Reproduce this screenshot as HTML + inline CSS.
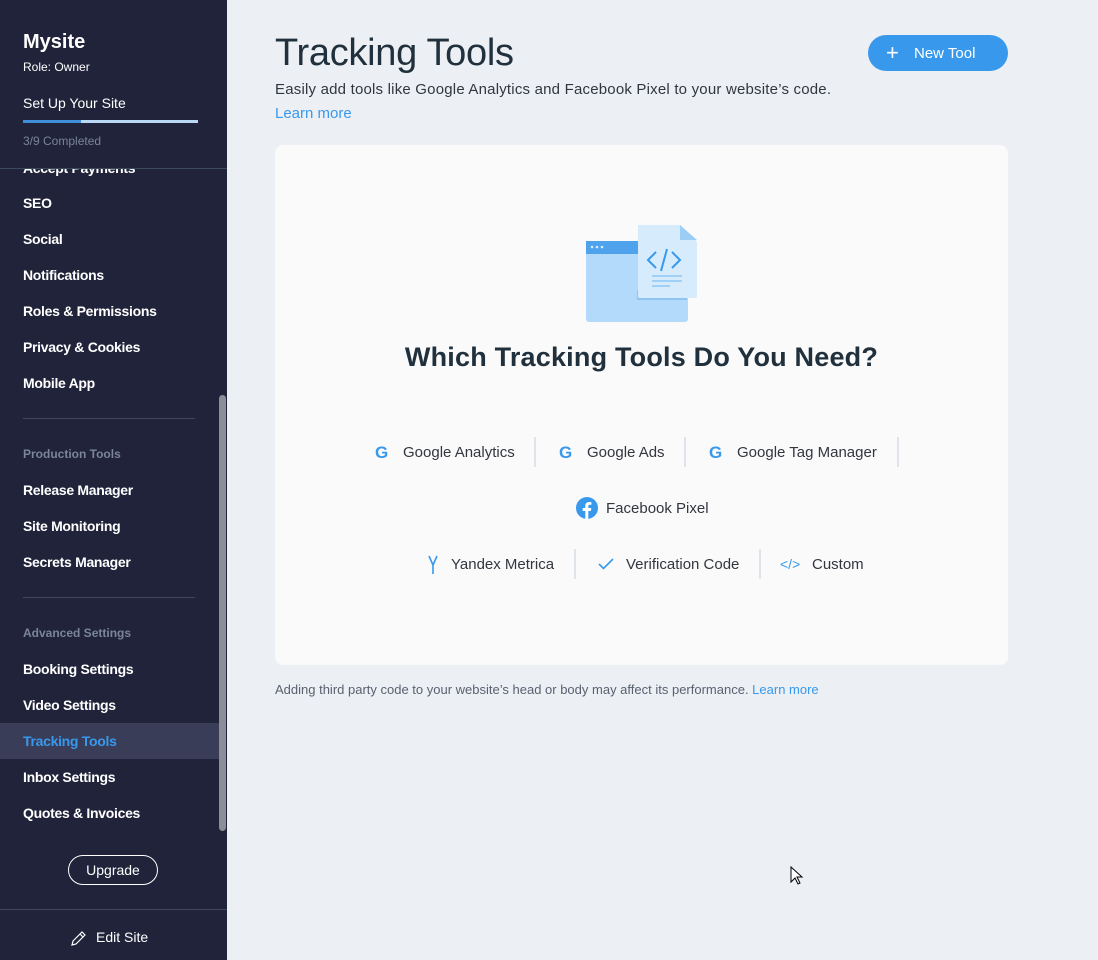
<!DOCTYPE html>
<html><head><meta charset="utf-8"><style>
*{margin:0;padding:0;box-sizing:border-box}
body{width:1098px;height:960px;overflow:hidden;background:#eceff4;font-family:"Liberation Sans",Arial,sans-serif;position:relative}
.sb{position:absolute;left:0;top:0;width:227px;height:960px;background:#20233a;color:#fff}
.t{position:absolute;left:23px;white-space:nowrap}
.item{position:absolute;left:23px;font-size:14px;font-weight:bold;color:#fff;white-space:nowrap;letter-spacing:-0.3px}
.hd{position:absolute;left:23px;font-size:12px;font-weight:bold;color:#7a8599}
.line{position:absolute;left:23px;width:172px;height:1px;background:#3d4a5c}
.main{position:absolute;left:227px;top:0;right:0;bottom:0}
.tl{position:absolute;font-size:15px;color:#32363f;white-space:nowrap}
.sep{position:absolute;width:2px;height:30px;background:#dfe3ea}
.g{position:absolute;font-size:17px;font-weight:bold;color:#3899ec}
</style></head><body>
<div class="sb">
 <div class="t" style="top:31px;font-size:20px;font-weight:bold">Mysite</div>
 <div class="t" style="top:60px;font-size:12px">Role: Owner</div>
 <div class="t" style="top:95px;font-size:14px">Set Up Your Site</div>
 <div style="position:absolute;left:23px;top:120px;width:175px;height:3px;background:#b9d8f5"></div>
 <div style="position:absolute;left:23px;top:120px;width:58px;height:3px;background:#3d8fd9"></div>
 <div class="t" style="top:134px;font-size:12px;color:#7a8599">3/9 Completed</div>
 <div style="position:absolute;left:0;top:168px;width:227px;height:1px;background:#3d4a5c"></div>
 <div style="position:absolute;left:0;top:169px;width:227px;height:8px;overflow:hidden"><div class="item" style="top:-9px">Accept Payments</div></div>
 <div class="item" style="top:195px">SEO</div>
 <div class="item" style="top:231px">Social</div>
 <div class="item" style="top:267px">Notifications</div>
 <div class="item" style="top:303px">Roles &amp; Permissions</div>
 <div class="item" style="top:339px">Privacy &amp; Cookies</div>
 <div class="item" style="top:375px">Mobile App</div>
 <div class="line" style="top:418px"></div>
 <div class="hd" style="top:447px">Production Tools</div>
 <div class="item" style="top:482px">Release Manager</div>
 <div class="item" style="top:518px">Site Monitoring</div>
 <div class="item" style="top:554px">Secrets Manager</div>
 <div class="line" style="top:597px"></div>
 <div class="hd" style="top:626px">Advanced Settings</div>
 <div class="item" style="top:661px">Booking Settings</div>
 <div class="item" style="top:697px">Video Settings</div>
 <div style="position:absolute;left:0;top:723px;width:219px;height:36px;background:#3a3d57"></div>
 <div class="item" style="top:733px;color:#3899ec">Tracking Tools</div>
 <div class="item" style="top:769px">Inbox Settings</div>
 <div class="item" style="top:805px">Quotes &amp; Invoices</div>
 <div style="position:absolute;left:219px;top:395px;width:7px;height:436px;background:#8b8d99;border-radius:4px"></div>
 <div style="position:absolute;left:68px;top:855px;width:90px;height:30px;border:1px solid #fff;border-radius:15px;font-size:14px;text-align:center;line-height:28px">Upgrade</div>
 <div style="position:absolute;left:0;top:909px;width:227px;height:1px;background:#3d4a5c"></div>
 <svg style="position:absolute;left:70px;top:929px" width="18" height="18" viewBox="0 0 18 18" fill="none" stroke="#fff" stroke-width="1.2"><path d="M2 16l1-4L12 3l3 3-9 9z M10 5l3 3"/></svg>
 <div class="t" style="left:96px;top:929px;font-size:14px">Edit Site</div>
</div>
<div class="main">
 <div style="position:absolute;left:48px;top:32px;font-size:38px;color:#20303c;letter-spacing:-0.3px">Tracking Tools</div>
 <div style="position:absolute;left:48px;top:81px;font-size:15px;color:#32363f;letter-spacing:0.2px">Easily add tools like Google Analytics and Facebook Pixel to your website’s code.</div>
 <div style="position:absolute;left:48px;top:105px;font-size:15px;color:#3899ec">Learn more</div>
 <div style="position:absolute;left:641px;top:35px;width:140px;height:36px;background:#3899ec;border-radius:18px;color:#fff;font-size:15px;line-height:36px"><span style="position:absolute;left:18px;top:0px;font-size:22px;font-weight:300">+</span><span style="position:absolute;left:46px;top:1px">New Tool</span></div>
 <div style="position:absolute;left:48px;top:145px;width:733px;height:520px;background:#fafafa;border-radius:8px">
  <svg style="position:absolute;left:310px;top:79px" width="115" height="100" viewBox="0 0 115 100">
   <rect x="1" y="17" width="102" height="81" rx="3" fill="#b3dafa"/>
   <rect x="1" y="17" width="102" height="13" fill="#4ea3ec"/>
   <circle cx="7" cy="23" r="1.3" fill="#d6ecfd"/><circle cx="12" cy="23" r="1.3" fill="#d6ecfd"/><circle cx="17" cy="23" r="1.3" fill="#d6ecfd"/>
   <rect x="52" y="66" width="50" height="10" fill="#8ec5f3"/>
   <path d="M53 1h42l17 17v54a2 2 0 0 1-2 2H55a2 2 0 0 1-2-2z" fill="#d6ecfd"/>
   <path d="M95 1v15h17z" fill="#9ccdf5"/>
   <path d="M71 28l-8 8 8 8M87 28l8 8-8 8M82 25l-6 22" stroke="#3899ec" stroke-width="2" fill="none"/>
   <path d="M67 52h30M67 57h30M67 62h18" stroke="#6bb5ef" stroke-width="1"/>
  </svg>
  <div style="position:absolute;left:0;width:733px;top:197px;text-align:center;font-size:27px;font-weight:bold;color:#20303c;letter-spacing:0.2px">Which Tracking Tools Do You Need?</div>
  <div class="g" style="left:100px;top:298px">G</div><div class="tl" style="left:128px;top:299px">Google Analytics</div>
  <div class="sep" style="left:259px;top:292px"></div>
  <div class="g" style="left:284px;top:298px">G</div><div class="tl" style="left:312px;top:299px">Google Ads</div>
  <div class="sep" style="left:409px;top:292px"></div>
  <div class="g" style="left:434px;top:298px">G</div><div class="tl" style="left:462px;top:299px">Google Tag Manager</div>
  <div class="sep" style="left:622px;top:292px"></div>
  <svg style="position:absolute;left:301px;top:352px" width="22" height="22" viewBox="0 0 22 22"><circle cx="11" cy="11" r="11" fill="#3899ec"/><path d="M12.3 22v-8h2.6l.4-3h-3V9.2c0-.9.3-1.5 1.5-1.5h1.6V5.1c-.3 0-1.2-.1-2.3-.1-2.3 0-3.8 1.4-3.8 3.9V11H6.7v3h2.6v8z" fill="#fff"/></svg>
  <div class="tl" style="left:331px;top:355px">Facebook Pixel</div>
  <svg style="position:absolute;left:152px;top:410px" width="12" height="20" viewBox="0 0 12 20"><path d="M2 1l4 9 4-9M6 10v9" stroke="#3899ec" stroke-width="1.6" fill="none"/></svg>
  <div class="tl" style="left:176px;top:411px">Yandex Metrica</div>
  <div class="sep" style="left:299px;top:404px"></div>
  <svg style="position:absolute;left:323px;top:412px" width="16" height="14" viewBox="0 0 16 14"><path d="M1 7l4.5 4.5L15 2" stroke="#3899ec" stroke-width="1.6" fill="none"/></svg>
  <div class="tl" style="left:351px;top:411px">Verification Code</div>
  <div class="sep" style="left:484px;top:404px"></div>
  <div class="tl" style="left:505px;top:411px;color:#3899ec;font-size:14px">&lt;/&gt;</div>
  <div class="tl" style="left:537px;top:411px">Custom</div>
 </div>
 <div style="position:absolute;left:48px;top:682px;font-size:13px;color:#5a6170">Adding third party code to your website’s head or body may affect its performance. <span style="color:#3899ec">Learn more</span></div>
 <svg style="position:absolute;left:563px;top:866px" width="14" height="20" viewBox="0 0 14 20"><path d="M1 1v15l4-4 3 6 2-1-3-6h5z" fill="#fff" stroke="#000" stroke-width="1"/></svg>
</div>
</body></html>
